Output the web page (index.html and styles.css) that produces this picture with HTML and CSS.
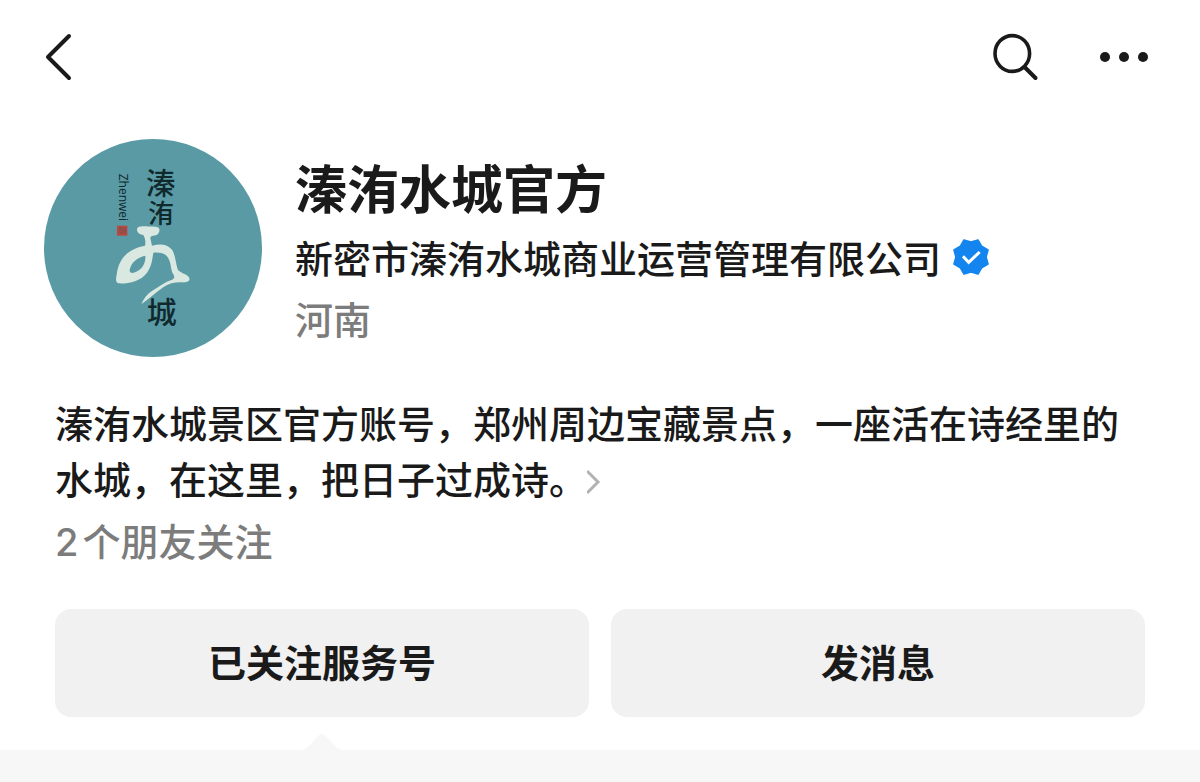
FILE: index.html
```html
<!DOCTYPE html>
<html lang="zh-CN">
<head>
    <meta charset="UTF-8">
    <meta name="viewport" content="width=device-width, initial-scale=1.0">
    <title>溱洧水城官方</title>
    <link rel="stylesheet" href="styles.css">
</head>
<body>
    <header class="navbar">
        <button class="icon-btn" aria-label="返回">
            <svg width="28" height="48" viewBox="0 0 28 48">
                <path d="M25 3 L4 24 L25 45" fill="none" stroke="#1a1a1a" stroke-width="4" stroke-linecap="round" stroke-linejoin="round"/>
            </svg>
        </button>
        <div class="nav-actions">
            <button class="icon-btn" aria-label="搜索">
                <svg width="48" height="48" viewBox="0 0 48 48">
                    <ellipse cx="20.3" cy="20.5" rx="17.3" ry="17.9" fill="none" stroke="#1a1a1a" stroke-width="3.6"/>
                    <path d="M32.5 34 L43.5 45" stroke="#1a1a1a" stroke-width="4" stroke-linecap="round"/>
                </svg>
            </button>
            <button class="icon-btn" aria-label="更多">
                <svg width="50" height="48" viewBox="0 0 50 48">
                    <g fill="#1a1a1a">
                        <circle cx="6" cy="24" r="5"/>
                        <circle cx="25" cy="24" r="5"/>
                        <circle cx="44" cy="24" r="5"/>
                    </g>
                </svg>
            </button>
        </div>
    </header>

    <main>
        <section class="profile">
            <svg class="avatar" viewBox="42 42 654 654" role="img" aria-label="溱洧水城">
                <circle cx="369" cy="369" r="327" fill="#5a9aa5"/>
                <text class="brush" x="348" y="207" font-size="88">溱</text>
                <text class="brush" x="354" y="294" font-size="78">洧</text>
                <text class="brush" x="350" y="594" font-size="90">城</text>
                <text class="pinyin" transform="translate(266 146) rotate(90)" font-size="36">Zhenwei</text>
                <!-- red seal -->
                <rect x="261" y="302" width="31" height="30" fill="#b8483f"/>
                <path d="M267 308 H274 V315 H267 M279 308 V326 M286 308 V326 M267 321 H274 V327 M279 317 H287" fill="none" stroke="#6d5458" stroke-width="2.5"/>
                <path fill="#d9e8e0" fill-rule="evenodd" d="M321 315 C320 306 328 303 345 304 C360 305 382 302 387 310 C391 318 386 328 378 331 C370 333 362 332 361 339 L366 362 C390 355 413 357 426 374 C436 389 438 420 444 435 C455 446 474 448 478 459 C481 469 471 473 457 472 C435 471 418 475 402 485 C380 500 358 520 334 538 C341 520 352 506 367 497 C389 484 404 471 426 464 C434 460 434 455 430 448 C421 435 425 416 414 398 C405 383 388 382 370 383 C366 411 362 440 335 459 C313 473 285 477 264 475 C257 472 257 461 260 449 C264 417 277 393 302 378 C318 369 330 364 345 362 C348 350 345 339 340 330 C330 329 322 324 321 315 Z M346 392 C321 397 304 414 300 431 C296 442 303 447 315 442 C335 435 348 416 346 392 Z"/>
            </svg>
            <div class="info">
                <h1 class="name">溱洧水城官方</h1>
                <div class="company">
                    <span>新密市溱洧水城商业运营管理有限公司</span>
                    <svg class="badge" viewBox="-54 -54 108 108" role="img" aria-label="已认证">
                        <path d="M-21 -51 L0 -45 L21 -51 L32 -32 L51 -21 L45 0 L51 21 L32 32 L21 51 L0 45 L-21 51 L-32 32 L-51 21 L-45 0 L-51 -21 L-32 -32 Z" fill="#1485ee" stroke="#1485ee" stroke-width="5" stroke-linejoin="round"/>
                        <path d="M-24 -2 L-7 16 L26 -15" fill="none" stroke="#fff" stroke-width="9"/>
                    </svg>
                </div>
                <p class="location">河南</p>
            </div>
        </section>

        <section class="about">
            <p class="intro">溱洧水城景区官方账号，郑州周边宝藏景点，一座活在诗经里的水城，在这里，把日子过成诗。<svg class="more" viewBox="0 0 16 28"><path d="M0 3 L11 14 L0 25" fill="none" stroke="#b2b2b2" stroke-width="3"/></svg></p>
            <p class="friends"><span class="count">2</span>个朋友关注</p>
        </section>

        <div class="columns">
            <button class="action">已关注服务号</button>
            <button class="action">发消息</button>
        </div>
        <div class="columns pointer">
            <svg width="42" height="16" viewBox="0 0 42 16">
                <path d="M0 16 C5 15 7 13 10 10 L17 2 Q21 -2 25 2 L32 10 C35 13 37 15 42 16 Z" fill="#f7f7f7"/>
            </svg>
        </div>
    </main>
    <div class="feed"></div>
</body>
</html>
```

FILE: styles.css
```css
:root {
    --text: #1a1a1a;
    --muted: #7c7c7c;
    --button: #f1f1f1;
    --feed: #f7f7f7;
}

* {
    margin: 0;
    padding: 0;
    box-sizing: border-box;
}

body {
    display: flex;
    flex-direction: column;
    min-height: 100vh;
    background: #fff;
    color: var(--text);
    font-family: 'Noto Sans CJK SC', sans-serif;
    font-size: 38px;
    font-weight: 500;
    line-height: 56px;
}

button {
    border: none;
    background: none;
    color: inherit;
    font: inherit;
    cursor: pointer;
}

svg {
    display: block;
}

.navbar {
    display: flex;
    justify-content: space-between;
    padding: 33px 51px 58px 44px;
}

.nav-actions {
    display: flex;
    gap: 59px;
}

.profile {
    display: flex;
    gap: 33px;
    padding: 0 44px;
}

.avatar {
    flex: none;
    width: 218px;
    height: 218px;
}

.brush {
    fill: #10292d;
    font-weight: 500;
}

.pinyin {
    fill: #10292d;
    font-family: 'Open Sans', sans-serif;
    font-weight: 400;
}

.info {
    padding-top: 18px;
}

.name {
    font-size: 52px;
    font-weight: 700;
    line-height: 60px;
}

.company {
    display: flex;
    align-items: center;
    gap: 12px;
    margin-top: 12px;
}

.badge {
    flex: none;
    width: 36px;
    height: 36px;
}

.location {
    margin-top: 5px;
    color: var(--muted);
}

.about {
    padding: 37px 55px 39px;
}

.more {
    display: inline-block;
    width: 16px;
    height: 28px;
    vertical-align: -2px;
}

.friends {
    margin-top: 6px;
    color: var(--muted);
}

.count {
    margin-right: 4px;
    font-family: Inter, sans-serif;
}

.columns {
    display: grid;
    grid-template-columns: 1fr 1fr;
    gap: 22px;
    padding: 0 55px;
}

.action {
    padding: 24px 26px 28px;
    border-radius: 16px;
    background: var(--button);
    font-weight: 700;
}

.action:active {
    background: #e5e5e5;
}

.pointer {
    justify-items: center;
    padding-top: 17px;
}

.feed {
    flex: 1;
    min-height: 32px;
    background: var(--feed);
}
```
